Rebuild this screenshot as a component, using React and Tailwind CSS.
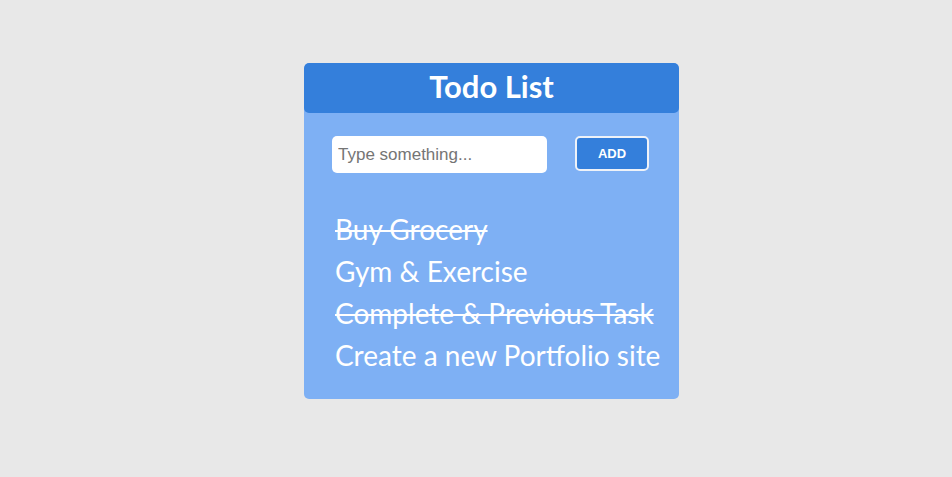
export default function App() {
  const todos = [
    { text: 'Buy Grocery', done: true },
    { text: 'Gym & Exercise', done: false },
    { text: 'Complete & Previous Task', done: true },
    { text: 'Create a new Portfolio site', done: false },
  ];

  return (
    <div className="min-h-[477px] w-full bg-[#e8e8e8] pt-[63px] pl-[304px]">
      <div className="w-[375px] rounded-[5px] bg-[#7eb0f4] pb-[23px] overflow-hidden">
        <div className="h-[50px] bg-[#347fdb] flex items-center justify-center rounded-[5px]">
          <h1 className="text-white text-[31px] font-bold font-['Lato',sans-serif] leading-none -mt-[3px]">Todo List</h1>
        </div>

        <div className="flex items-start pl-[28px] mt-[23px]">
          <input
            type="text"
            placeholder="Type something..."
            className="w-[215px] h-[37px] rounded-[5px] bg-white px-[6px] text-[17px] font-['Liberation_Sans',Arial,sans-serif] text-gray-800 placeholder:text-[#757575] outline-none"
          />
          <button className="ml-[28px] w-[74px] h-[35px] rounded-[5px] border-2 border-[#eef2f8] bg-[#347fdb] text-white text-[13px] font-bold font-['Liberation_Sans',Arial,sans-serif]">
            ADD
          </button>
        </div>

        <ul className="mt-[35px] pl-[31px] font-['Lato',sans-serif] text-white text-[28px] leading-[42px]">
          {todos.map((t) => (
            <li key={t.text} className={t.done ? 'line-through decoration-2' : ''}>
              {t.text}
            </li>
          ))}
        </ul>
      </div>
    </div>
  );
}
